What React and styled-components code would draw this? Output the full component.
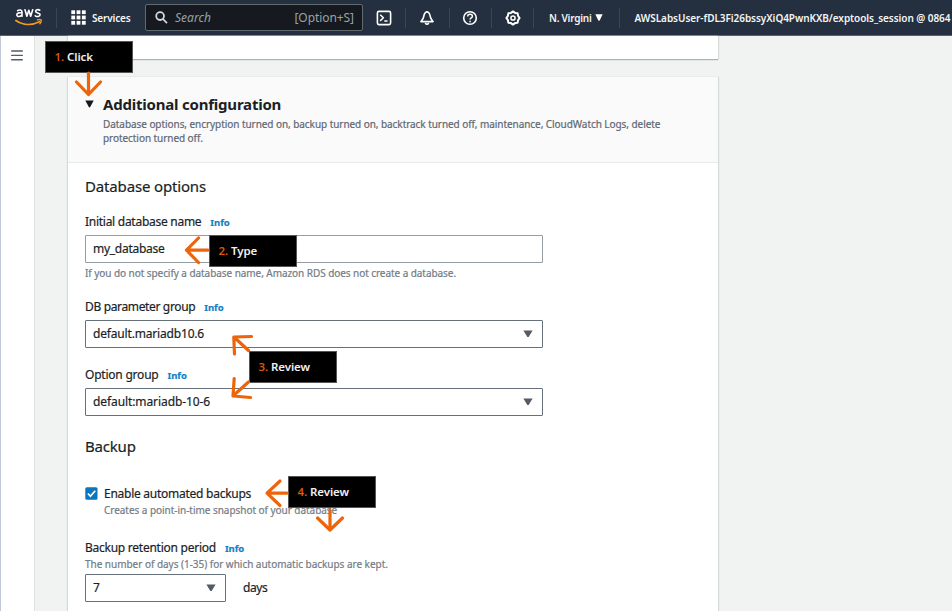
import React from "react";
import styled, { createGlobalStyle } from "styled-components";

const Global = createGlobalStyle`
  * { box-sizing: border-box; }
  body { margin: 0; overflow: hidden; background: #f1f3f3; }
`;

const Page = styled.div`
  position: relative;
  display: flex;
  flex-direction: column;
  width: 952px;
  height: 611px;
  overflow: hidden;
  background: #f1f3f3;
  color: #1a1f27;
  font-family: "Noto Sans", "Open Sans", sans-serif;
  font-size: 12px;
  -webkit-text-stroke: 0.2px;
`;

const NavBar = styled.header`
  display: flex;
  flex: none;
  align-items: center;
  height: 36px;
  background: #242f3f;
  border-bottom: 1px solid #58626f;
  color: #f4f5f6;
  white-space: nowrap;
  -webkit-text-stroke: 0;
`;
const Logo = styled.svg`
  flex: none;
  margin: 0 13px 0 15px;
`;
const NavDivider = styled.span`
  flex: none;
  width: 1px;
  height: 20px;
  background: #3b4653;
`;
const ServicesButton = styled.div`
  display: flex;
  align-items: center;
  gap: 6px;
  width: 88px;
  padding-left: 14px;
`;
const NavText = styled.span`
  font-size: 10px;
  font-weight: 600;
  line-height: 16px;
  letter-spacing: ${(p) => p.$ls}px;
`;
const SearchBox = styled.div`
  display: flex;
  flex: none;
  align-items: center;
  width: 218px;
  height: 27px;
  padding: 0 8px 0 9px;
  border: 1px solid #5f6b6d;
  border-radius: 2px;
  background: #161a20;
  color: #95a4a5;
`;
const SearchHint = styled.span`
  flex: 1;
  padding-left: 7px;
  font-style: italic;
  letter-spacing: 0.03px;
`;
const Shortcut = styled.span`
  letter-spacing: -0.07px;
`;
const NavIcon = styled.div`
  display: flex;
  flex: none;
  align-items: center;
  justify-content: center;
  width: ${(p) => p.$w}px;
  padding-right: ${(p) => p.$pr || 0}px;
`;
const Region = styled.div`
  display: flex;
  align-items: center;
  gap: 4px;
  width: 85px;
  padding-left: 15px;
`;
const Account = styled.div`
  display: flex;
  padding-left: 14.5px;
`;

const Body = styled.div`
  display: flex;
  flex: 1;
  min-height: 0;
`;
const Rail = styled.nav`
  flex: none;
  width: 35px;
  padding: 12px 0 0 10px;
  background: #fff;
  border-left: 1px solid #c3c9d8;
  border-right: 1px solid #dde1e2;
`;
const Content = styled.main`
  display: flex;
  flex-direction: column;
  flex: none;
  width: 650px;
  margin-left: 33px;
`;
const Panel = styled.section`
  flex: none;
  height: ${(p) => p.$h}px;
  margin-bottom: 18px;
  background: #fff;
  box-shadow: 1px 0 1px #d5dbdb, -1px 0 1px #d5dbdb, 0 1px 1px #98a1a9;
`;
const PanelHeader = styled.div`
  display: flex;
  gap: 9px;
  height: 86px;
  padding: 16px 0 0 17px;
  background: #fafafa;
  border-bottom: 1px solid #e6eaea;
`;
const Disclosure = styled.svg`
  flex: none;
  margin-top: 7px;
`;
const Title = styled.h2`
  margin: 0;
  font-size: 15px;
  font-weight: 700;
  line-height: 22px;
  letter-spacing: -0.21px;
  -webkit-text-stroke: 0;
`;
const Summary = styled.p`
  width: 575px;
  margin: 2px 0 0;
  font-size: 10px;
  line-height: 14px;
  letter-spacing: -0.06px;
  color: #5f6874;
`;
const Form = styled.div`
  display: flex;
  flex-direction: column;
  padding: 12px 0 0 17px;
`;
const SectionTitle = styled.h3`
  height: 22px;
  margin: ${(p) => p.$top}px 0 0;
  font-size: 15px;
  font-weight: 400;
  line-height: 22px;
  letter-spacing: ${(p) => p.$ls}px;
`;
const LabelRow = styled.div`
  display: flex;
  align-items: baseline;
  gap: 9px;
  height: 18px;
  margin-top: ${(p) => p.$top}px;
  line-height: 18px;
`;
const Text = styled.span`
  letter-spacing: ${(p) => p.$ls}px;
`;
const InfoLink = styled.a`
  color: #1180c4;
  font-size: 9.5px;
  font-weight: 700;
  letter-spacing: -0.05px;
`;
const Hint = styled.div`
  height: 16px;
  margin: ${(p) => p.$m || "0"};
  font-size: 10px;
  line-height: 16px;
  letter-spacing: ${(p) => p.$ls}px;
  color: #737c87;
`;
const Field = styled.div`
  display: flex;
  align-items: center;
  justify-content: space-between;
  width: ${(p) => p.$w || 457.5}px;
  height: 28px;
  margin-top: ${(p) => p.$top ?? 4}px;
  padding: 0 9px 1px 7px;
  border: 1px solid ${(p) => (p.$select ? "#67717b" : "#959da4")};
  border-radius: 1px;
  background: #fff;
`;
const CheckRow = styled.div`
  display: flex;
  align-items: center;
  gap: 6px;
  height: 18px;
  margin-top: 27px;
`;
const InlineRow = styled.div`
  display: flex;
  align-items: center;
  gap: 17px;
`;

const Overlay = styled.svg`
  position: absolute;
  inset: 0;
  pointer-events: none;
`;
const Callout = styled.div`
  position: absolute;
  left: ${(p) => p.$x}px;
  top: ${(p) => p.$y}px;
  display: flex;
  align-items: center;
  width: 88px;
  height: 32px;
  padding: 0 0 2px 8.5px;
  background: #000;
  border: 1px solid #555;
  color: #f1f1f1;
  font-size: 11.5px;
  font-weight: 600;
  letter-spacing: -0.08px;
  -webkit-text-stroke: 0;
`;
const Step = styled.span`
  width: 12.5px;
  color: #d9570f;
  font-size: 11.5px;
  white-space: nowrap;
`;

const Caret = ({ color = "#545b64", w = 10, h = 7.5 }) => (
  <svg width={w} height={h} viewBox="0 0 10 8" preserveAspectRatio="none">
    <path d="M.4.4h9.2L5.8 7.3q-.8 1-1.6 0Z" fill={color} />
  </svg>
);

const AwsLogo = () => (
  <Logo width="28" height="19" viewBox="0 0 28 19" fill="none" strokeLinecap="round" strokeLinejoin="round">
    <g stroke="#fff" strokeWidth="1.6">
      <path d="M2.6 2.6C4 1.7 7 1.4 7 3.9v4.4M7 5C5.200 4.500 1.800 4.500 1.800 6.800c0 2.300 4 2 5.200.2" />
      <path d="m10 1.800 1.900 6.500 1.900-6.100 1.900 6.100 2-6.500" />
      <path d="M24.800 2.200c-1.500-.9-4.200-.7-4.200 1.100 0 2 4.500 1.200 4.500 3.300 0 2.200-3.200 2.300-4.800 1.200" />
    </g>
    <path d="M.9 12.600c7.300 4.900 16.300 4.900 23.500 1.200" stroke="#f39a20" strokeWidth="1.8" />
    <path d="M22.400 11.900c1.500-.4 3.100-.5 3.800 0 .3 1-.3 2.600-1.300 3.800" stroke="#f39a20" strokeWidth="1.4" />
  </Logo>
);

const GridIcon = () => (
  <svg width="15" height="15" viewBox="0 0 15 15" fill="#fff">
    {[0.3, 5.6, 10.9].map((y) =>
      [0.3, 5.6, 10.9].map((x) => <rect key={x + "-" + y} x={x} y={y} width="3.8" height="3.8" />)
    )}
  </svg>
);

const SearchIcon = () => (
  <svg width="13" height="13" viewBox="0 0 13 13" fill="none" stroke="#d3dada" strokeWidth="1.8">
    <circle cx="5.1" cy="5.1" r="3.9" />
    <path d="m8 8 4 4.2" />
  </svg>
);

const IconSvg = ({ children }) => (
  <svg width="16" height="16" viewBox="0 0 16 16" fill="none" stroke="#fff" strokeWidth="1.6" strokeLinejoin="round">
    {children}
  </svg>
);

const gearPath = Array.from({ length: 16 }, (_, i) => {
  const a = ((i * 22.5 - 90) * Math.PI) / 180;
  const r = i % 2 ? 5.5 : 6.6;
  return `${i ? "L" : "M"}${(8 + r * Math.cos(a)).toFixed(2)} ${(8 + r * Math.sin(a)).toFixed(2)}`;
}).join("") + "Z";

const Label = ({ top, ls, children }) => (
  <LabelRow $top={top}>
    <Text $ls={ls}>{children}</Text>
    <InfoLink>Info</InfoLink>
  </LabelRow>
);

export default function App() {
  return (
    <Page>
      <Global />
      <NavBar>
        <AwsLogo />
        <NavDivider />
        <ServicesButton>
          <GridIcon />
          <NavText $ls={-0.17}>Services</NavText>
        </ServicesButton>
        <SearchBox>
          <SearchIcon />
          <SearchHint>Search</SearchHint>
          <Shortcut>[Option+S]</Shortcut>
        </SearchBox>
        <NavIcon $w={42}>
          <IconSvg>
            <rect x="1.4" y="1.4" width="13.2" height="13.2" rx="1.6" />
            <path d="m4.2 4.7 3.2 3.1-3.2 3.1M8.3 11h3.2" strokeWidth="1.5" />
          </IconSvg>
        </NavIcon>
        <NavDivider />
        <NavIcon $w={43} $pr={1.5}>
          <IconSvg>
            <path d="M8 1.8C5.6 2.3 5.1 4.2 4.7 6.7 4.4 8.8 3 10 1.9 11.6h12.2C13 10 11.6 8.8 11.3 6.7 10.9 4.2 10.4 2.3 8 1.8Z" />
            <path d="M6.2 13.1q1.8 2.4 3.6 0" />
          </IconSvg>
        </NavIcon>
        <NavDivider />
        <NavIcon $w={41} $pr={2}>
          <IconSvg>
            <circle cx="8" cy="8" r="6.3" />
            <path d="M5.7 6.5c0-3 4.7-2.8 4.7-.2 0 1.6-2.3 1.6-2.3 3.3M8.1 10.8v1.5" strokeWidth="1.5" />
          </IconSvg>
        </NavIcon>
        <NavDivider />
        <NavIcon $w={41}>
          <IconSvg>
            <path d={gearPath} strokeWidth="2" />
            <circle cx="8" cy="8" r="2.1" strokeWidth="1.5" />
          </IconSvg>
        </NavIcon>
        <NavDivider />
        <Region>
          <NavText $ls={-0.25}>N. Virgini</NavText>
          <Caret color="#fff" w={8} h={7} />
        </Region>
        <NavDivider />
        <Account>
          <NavText $ls={-0.055}>AWSLabsUser-fDL3Fi26bssyXiQ4PwnKXB/exptools_session @ 0864</NavText>
        </Account>
      </NavBar>

      <Body>
        <Rail>
          <svg width="12" height="11" viewBox="0 0 12 11" stroke="#545b64" strokeWidth="1.4" strokeLinecap="round">
            <path d="M.7 1h10.6M.7 5.4h10.6M.7 9.8h10.6" />
          </svg>
        </Rail>
        <Content>
          <Panel $h={23} />
          <Panel $h={560}>
            <PanelHeader>
              <Disclosure width="9" height="8" viewBox="0 0 9 8">
                <path d="M.3.4h8.4L5.2 7.1q-.7.9-1.4 0Z" fill="#16191f" />
              </Disclosure>
              <div>
                <Title>Additional configuration</Title>
                <Summary>
                  Database options, encryption turned on, backup turned on, backtrack turned off, maintenance,
                  CloudWatch Logs, delete
                  <br />
                  protection turned off.
                </Summary>
              </div>
            </PanelHeader>
            <Form>
              <SectionTitle $top={0} $ls={-0.155}>Database options</SectionTitle>
              <Label top={16} ls={-0.27}>Initial database name</Label>
              <Field>
                <Text $ls={-0.27}>my_database</Text>
              </Field>
              <Hint $m="2px 0 0" $ls={-0.062}>
                If you do not specify a database name, Amazon RDS does not create a database.
              </Hint>
              <Label top={17} ls={-0.35}>DB parameter group</Label>
              <Field $select>
                <Text $ls={-0.175}>default.mariadb10.6</Text>
                <Caret />
              </Field>
              <Label top={18} ls={-0.22}>Option group</Label>
              <Field $select>
                <Text $ls={-0.09}>default:mariadb-10-6</Text>
                <Caret />
              </Field>
              <SectionTitle $top={19} $ls={-0.2}>Backup</SectionTitle>
              <CheckRow>
                <svg width="13" height="13" viewBox="0 0 13 13">
                  <rect x=".3" y=".3" width="12.2" height="12.4" rx="1.5" fill="#0b75bd" />
                  <path d="m2.9 6.5 2.5 2.7 4.8-5.5" fill="none" stroke="#fff" strokeWidth="1.7" />
                </svg>
                <Text $ls={-0.26}>Enable automated backups</Text>
              </CheckRow>
              <Hint $m="0 0 0 19px" $ls={-0.04}>Creates a point-in-time snapshot of your database</Hint>
              <Label top={21} ls={-0.25}>Backup retention period</Label>
              <Hint $m="-1px 0 0" $ls={-0.03}>The number of days (1-35) for which automatic backups are kept.</Hint>
              <InlineRow>
                <Field $select $w={141} $top={2}>
                  <Text $ls={0}>7</Text>
                  <Caret />
                </Field>
                <Text $ls={-0.4}>days</Text>
              </InlineRow>
            </Form>
          </Panel>
        </Content>
      </Body>

      <Callout $x={45} $y={41}><Step>1.</Step>Click</Callout>
      <Callout $x={209} $y={235}><Step>2.</Step>Type</Callout>
      <Callout $x={249} $y={351}><Step>3.</Step>Review</Callout>
      <Callout $x={288} $y={476}><Step>4.</Step>Review</Callout>
      <Overlay
        width="952"
        height="611"
        viewBox="0 0 952 611"
        fill="none"
        stroke="#ed640a"
        strokeWidth="3.2"
        strokeLinecap="round"
        strokeLinejoin="round"
      >
        <path d="M88.5 73V94M76.5 82 88.5 94.5 100.5 82" />
        <path d="M208 250.2H187M198.5 238 186.5 250.2 198.5 262.5" />
        <path d="M248.5 350.5 234.5 337.5M251.5 336.5 233.8 337 234.5 354" />
        <path d="M248.5 382 234 395M234.2 378.5 233 396 250.5 397.5" />
        <path d="M287 493.2H267.5M280 481 267 493.2 280 505.5" />
        <path d="M330 510V529M317.5 518 330 530 342.5 518" />
      </Overlay>
    </Page>
  );
}
